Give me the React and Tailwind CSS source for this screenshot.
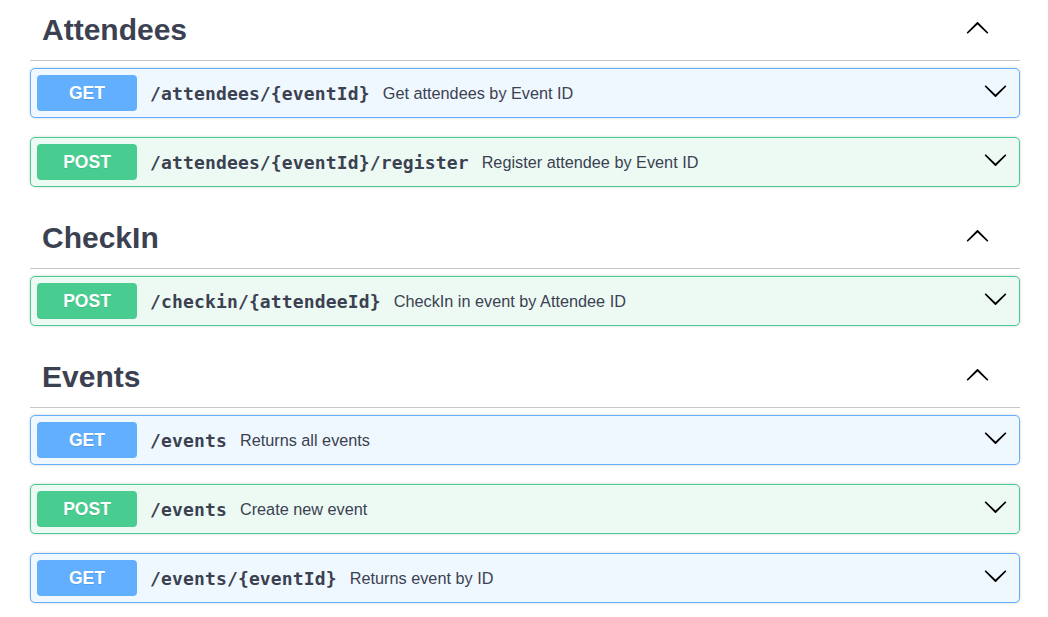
const sections = [
  {
    name: "Attendees",
    ops: [
      { method: "GET", path: "/attendees/{eventId}", summary: "Get attendees by Event ID" },
      { method: "POST", path: "/attendees/{eventId}/register", summary: "Register attendee by Event ID" },
    ],
  },
  {
    name: "CheckIn",
    ops: [
      { method: "POST", path: "/checkin/{attendeeId}", summary: "CheckIn in event by Attendee ID" },
    ],
  },
  {
    name: "Events",
    ops: [
      { method: "GET", path: "/events", summary: "Returns all events" },
      { method: "POST", path: "/events", summary: "Create new event" },
      { method: "GET", path: "/events/{eventId}", summary: "Returns event by ID" },
    ],
  },
];

const styles = {
  GET: {
    row: "border-[#61affe] bg-[#eff7ff]",
    badge: "bg-[#61affe]",
  },
  POST: {
    row: "border-[#49cc90] bg-[#edfaf4]",
    badge: "bg-[#49cc90]",
  },
};

function Arrow({ up = false }) {
  return (
    <svg
      width="25"
      height="25"
      viewBox="0 0 20 20"
      className={up ? "rotate-180 shrink-0" : "shrink-0"}
      fill="#000"
    >
      <path d="M17.418 6.109c.272-.268.709-.268.979 0s.271.701 0 .969l-7.908 7.83c-.27.268-.707.268-.979 0l-7.908-7.83c-.27-.268-.27-.701 0-.969.271-.268.709-.268.979 0L10 13.25l7.418-7.141z" />
    </svg>
  );
}

function Operation({ method, path, summary }) {
  const s = styles[method];
  return (
    <div
      className={`flex items-center h-[50px] border rounded-[5px] p-[6px] shadow-[0_0_3px_rgba(0,0,0,0.19)] ${s.row}`}
    >
      <div
        className={`flex items-center justify-center w-[100px] h-[36px] rounded-[4px] text-white font-bold text-[17.5px] font-['Liberation_Sans',Arial,sans-serif] [text-shadow:0_1px_0_rgba(0,0,0,0.1)] ${s.badge}`}
      >
        {method}
      </div>
      <span className="ml-[13px] font-['DejaVu_Sans_Mono',monospace] font-bold text-[18px] tracking-[0.15px] text-[#3b4151]">
        {path}
      </span>
      <span className="ml-[13px] font-['Liberation_Sans',Arial,sans-serif] text-[16.25px] text-[#3b4151]">
        {summary}
      </span>
      <div className="ml-auto mr-[5px] mb-[5px] flex items-center">
        <Arrow />
      </div>
    </div>
  );
}

export default function App() {
  return (
    <div className="min-h-screen bg-white pl-[30px] pr-[28px]">
      {sections.map((section) => (
        <section key={section.name} className="pb-[21px]">
          <div className="flex items-center h-[61px] border-b border-[#c4c6cb] pl-[12px]">
            <h3 className="font-['Liberation_Sans',Arial,sans-serif] font-bold text-[30px] leading-[36px] text-[#3b4151]">
              {section.name}
            </h3>
            <div className="ml-auto mr-[30px] mb-[3px] flex items-center">
              <Arrow up />
            </div>
          </div>
          <div className="flex flex-col gap-[19px] mt-[7px]">
            {section.ops.map((op) => (
              <Operation key={op.method + op.path} {...op} />
            ))}
          </div>
        </section>
      ))}
    </div>
  );
}
